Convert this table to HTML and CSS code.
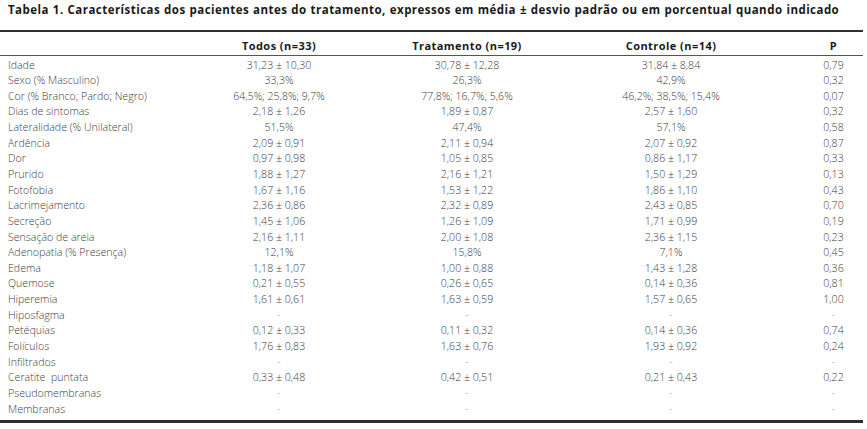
FILE: index.html
```html
<!DOCTYPE html>
<html lang="pt">
<head>
<meta charset="utf-8">
<link rel="stylesheet" href="styles.css">
</head>
<body>
<p class="title">Tabela 1. Características dos pacientes antes do tratamento, expressos em média ± desvio padrão ou em porcentual quando indicado</p>
<table class="data">
<colgroup><col class="c-label"><col class="c-todos"><col class="c-trat"><col class="c-ctrl"><col class="c-p"></colgroup>
<thead>
<tr><th></th><th>Todos (n=33)</th><th>Tratamento (n=19)</th><th>Controle (n=14)</th><th class="p">P</th></tr>
</thead>
<tbody>
<tr><td>Idade</td><td>31,23 ± 10,30</td><td>30,78 ± 12,28</td><td>31,84 ± 8,84</td><td class="p">0,79</td></tr>
<tr><td>Sexo (% Masculino)</td><td>33,3%</td><td>26,3%</td><td>42,9%</td><td class="p">0,32</td></tr>
<tr><td>Cor (% Branco; Pardo; Negro)</td><td>64,5%; 25,8%; 9,7%</td><td>77,8%; 16,7%; 5,6%</td><td>46,2%; 38,5%; 15,4%</td><td class="p">0,07</td></tr>
<tr><td>Dias de sintomas</td><td>2,18 ± 1,26</td><td>1,89 ± 0,87</td><td>2,57 ± 1,60</td><td class="p">0,32</td></tr>
<tr><td>Lateralidade (% Unilateral)</td><td>51,5%</td><td>47,4%</td><td>57,1%</td><td class="p">0,58</td></tr>
<tr><td>Ardência</td><td>2,09 ± 0,91</td><td>2,11 ± 0,94</td><td>2,07 ± 0,92</td><td class="p">0,87</td></tr>
<tr><td>Dor</td><td>0,97 ± 0,98</td><td>1,05 ± 0,85</td><td>0,86 ± 1,17</td><td class="p">0,33</td></tr>
<tr><td>Prurido</td><td>1,88 ± 1,27</td><td>2,16 ± 1,21</td><td>1,50 ± 1,29</td><td class="p">0,13</td></tr>
<tr><td>Fotofobia</td><td>1,67 ± 1,16</td><td>1,53 ± 1,22</td><td>1,86 ± 1,10</td><td class="p">0,43</td></tr>
<tr><td>Lacrimejamento</td><td>2,36 ± 0,86</td><td>2,32 ± 0,89</td><td>2,43 ± 0,85</td><td class="p">0,70</td></tr>
<tr><td>Secreção</td><td>1,45 ± 1,06</td><td>1,26 ± 1,09</td><td>1,71 ± 0,99</td><td class="p">0,19</td></tr>
<tr><td>Sensação de areia</td><td>2,16 ± 1,11</td><td>2,00 ± 1,08</td><td>2,36 ± 1,15</td><td class="p">0,23</td></tr>
<tr><td>Adenopatia (% Presença)</td><td>12,1%</td><td>15,8%</td><td>7,1%</td><td class="p">0,45</td></tr>
<tr><td>Edema</td><td>1,18 ± 1,07</td><td>1,00 ± 0,88</td><td>1,43 ± 1,28</td><td class="p">0,36</td></tr>
<tr><td>Quemose</td><td>0,21 ± 0,55</td><td>0,26 ± 0,65</td><td>0,14 ± 0,36</td><td class="p">0,81</td></tr>
<tr><td>Hiperemia</td><td>1,61 ± 0,61</td><td>1,63 ± 0,59</td><td>1,57 ± 0,65</td><td class="p">1,00</td></tr>
<tr><td>Hiposfagma</td><td class="dash">-</td><td class="dash">-</td><td class="dash">-</td><td class="p dash">-</td></tr>
<tr><td>Petéquias</td><td>0,12 ± 0,33</td><td>0,11 ± 0,32</td><td>0,14 ± 0,36</td><td class="p">0,74</td></tr>
<tr><td>Folículos</td><td>1,76 ± 0,83</td><td>1,63 ± 0,76</td><td>1,93 ± 0,92</td><td class="p">0,24</td></tr>
<tr><td>Infiltrados</td><td class="dash">-</td><td class="dash">-</td><td class="dash">-</td><td class="p dash">-</td></tr>
<tr><td>Ceratite&nbsp; puntata</td><td>0,33 ± 0,48</td><td>0,42 ± 0,51</td><td>0,21 ± 0,43</td><td class="p">0,22</td></tr>
<tr><td>Pseudomembranas</td><td class="dash">-</td><td class="dash">-</td><td class="dash">-</td><td class="p dash">-</td></tr>
<tr><td>Membranas</td><td class="dash">-</td><td class="dash">-</td><td class="dash">-</td><td class="p dash">-</td></tr>
</tbody>
</table>
</body>
</html>
```

FILE: styles.css
```css
html, body {
  margin: 0;
  padding: 0;
  background: #ffffff;
}

body {
  font-family: "Open Sans", "DejaVu Sans", sans-serif;
  color: #3c3c3c;
}

.title {
  margin: 0;
  padding: 3px 0 0 8px;
  font-size: 11.5px;
  line-height: 14px;
  font-weight: 700;
  color: #1a1a1a;
  letter-spacing: 0.46px;
  word-spacing: 0.5px;
  white-space: nowrap;
}

.data {
  margin-top: 12.5px;
  width: 863px;
  table-layout: fixed;
  border-collapse: collapse;
  border-top: 2px solid #2e2e2e;
  border-bottom: 3px solid #2e2e2e;
}

.c-label { width: 180px; }
.c-todos { width: 198px; }
.c-trat { width: 178px; }
.c-ctrl { width: 230px; }
.c-p { width: 77px; }

.data th {
  font-size: 11px;
  line-height: 14px;
  font-weight: 700;
  color: #1a1a1a;
  letter-spacing: 0.45px;
  text-align: center;
  padding: 7px 0 2px;
  border-bottom: 1.5px solid #555555;
}

.data td {
  font-size: 10.6px;
  line-height: 15.64px;
  font-weight: 300;
  text-align: center;
  padding: 0;
  white-space: nowrap;
}

.data td:first-child {
  text-align: left;
  padding-left: 8px;
}

.data .p {
  padding-left: 18px;
}

.data tbody tr:first-child td {
  padding-top: 2px;
}

.data tbody tr:last-child td {
  padding-bottom: 3px;
}

.data .dash {
  color: #9a9a9a;
}
```
